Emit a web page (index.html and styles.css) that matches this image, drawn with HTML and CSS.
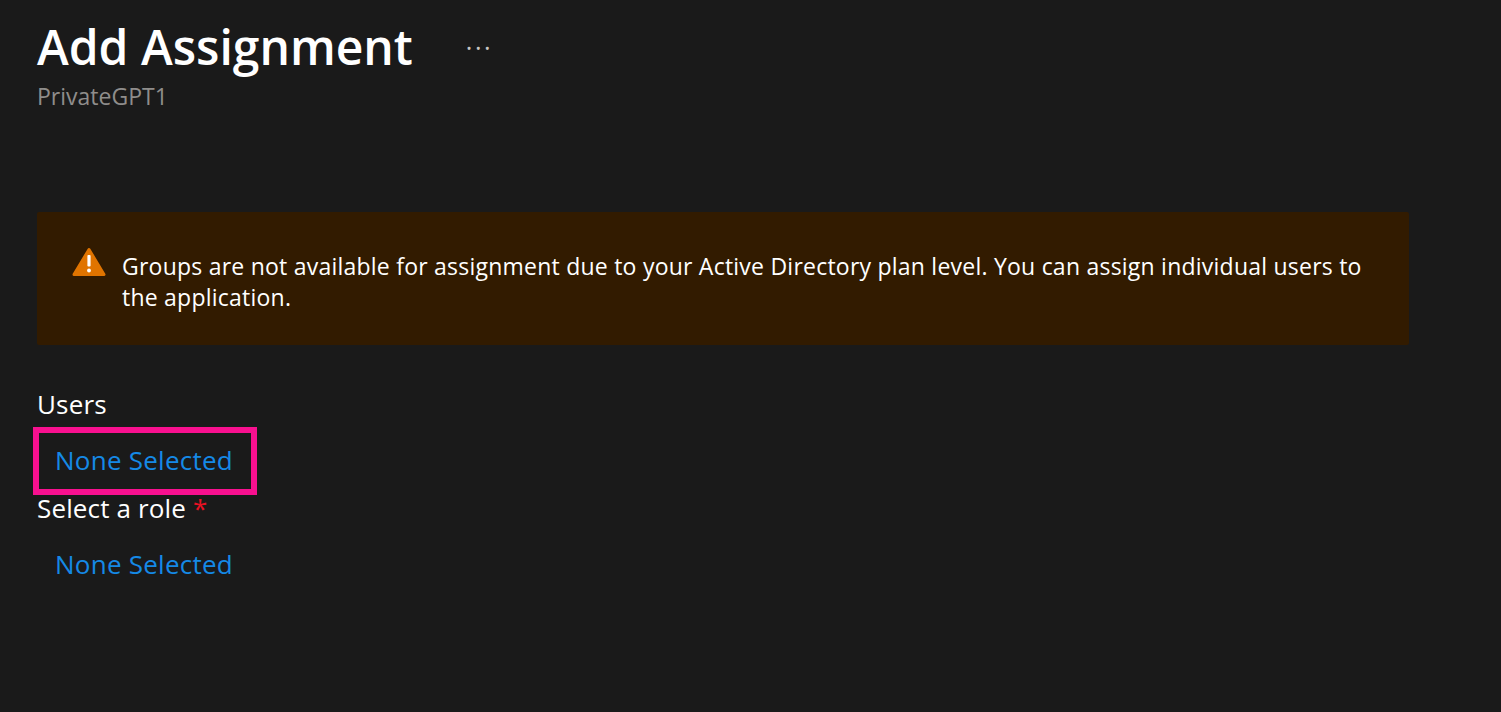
FILE: index.html
```html
<!DOCTYPE html>
<html lang="en">

<head>
    <meta charset="UTF-8">
    <meta name="viewport" content="width=device-width, initial-scale=1.0">
    <title>Add Assignment</title>
    <link rel="stylesheet" href="styles.css">
</head>

<body>
    <div class="page">
        <div class="title-row">
            <h1 class="title">Add Assignment</h1>
            <span class="more">...</span>
        </div>
        <div class="subtitle">PrivateGPT1</div>

        <div class="banner">
            <svg class="warn-icon" width="36" height="30" viewBox="0 0 36 30">
                <path d="M18 2.5 L33 27.5 H3 Z" fill="#e07400" stroke="#e07400" stroke-width="3" stroke-linejoin="round" />
                <rect x="16.4" y="8" width="3.2" height="11.5" rx="1" fill="#fff" />
                <circle cx="18" cy="23.5" r="1.9" fill="#fff" />
            </svg>
            <p class="banner-text">Groups are not available for assignment due to your Active Directory plan level. You can assign individual users to the application.</p>
        </div>

        <div class="field-label">Users</div>
        <a class="picker picker-active">None Selected</a>
        <div class="field-label">Select a role <span class="required">*</span></div>
        <a class="picker">None Selected</a>
    </div>
</body>

</html>
```
FILE: styles.css
```css
body {
    margin: 0;
    background: #1a1a1a;
    color: #fff;
    font-family: "Open Sans", "Noto Sans", sans-serif;
    height: 712px;
    overflow: hidden;
}

.page {
    padding: 14px 0 0 37px;
    width: 1372px;
}

.title-row {
    display: flex;
    align-items: flex-start;
    height: 64px;
}

.title {
    margin: 1px 0 0;
    font-size: 48px;
    font-weight: 600;
    line-height: 64px;
}

.more {
    margin: 11px 0 0 53px;
    font-size: 25px;
    line-height: 30px;
    letter-spacing: 2.5px;
    color: #c8c6c4;
}

.subtitle {
    font-size: 23px;
    line-height: 36px;
    color: #8f8d8b;
}

.banner {
    display: flex;
    align-items: flex-start;
    margin-top: 98px;
    height: 133px;
    background: #321b00;
    border-radius: 2px;
}

.warn-icon {
    flex: none;
    margin: 35px 0 0 34px;
}

.banner-text {
    margin: 39px 0 0 15px;
    width: 1250px;
    font-size: 23px;
    line-height: 31px;
    letter-spacing: 0.23px;
}

.field-label {
    font-size: 26px;
    line-height: 36px;
    letter-spacing: 0.15px;
}

.banner + .field-label {
    margin-top: 41px;
}

.required {
    color: #e81123;
}

.picker {
    display: block;
    width: 224px;
    height: 67px;
    margin-top: 5px;
    padding-left: 18px;
    box-sizing: border-box;
    font-size: 26px;
    line-height: 67px;
    letter-spacing: 0.25px;
    color: #1589e6;
}

.picker-active {
    height: 68px;
    margin-top: 5px;
    margin-left: -4px;
    padding-left: 16px;
    border: 6px solid #f8108f;
    line-height: 54px;
}

.picker-active + .field-label {
    margin-top: -5px;
}
```
